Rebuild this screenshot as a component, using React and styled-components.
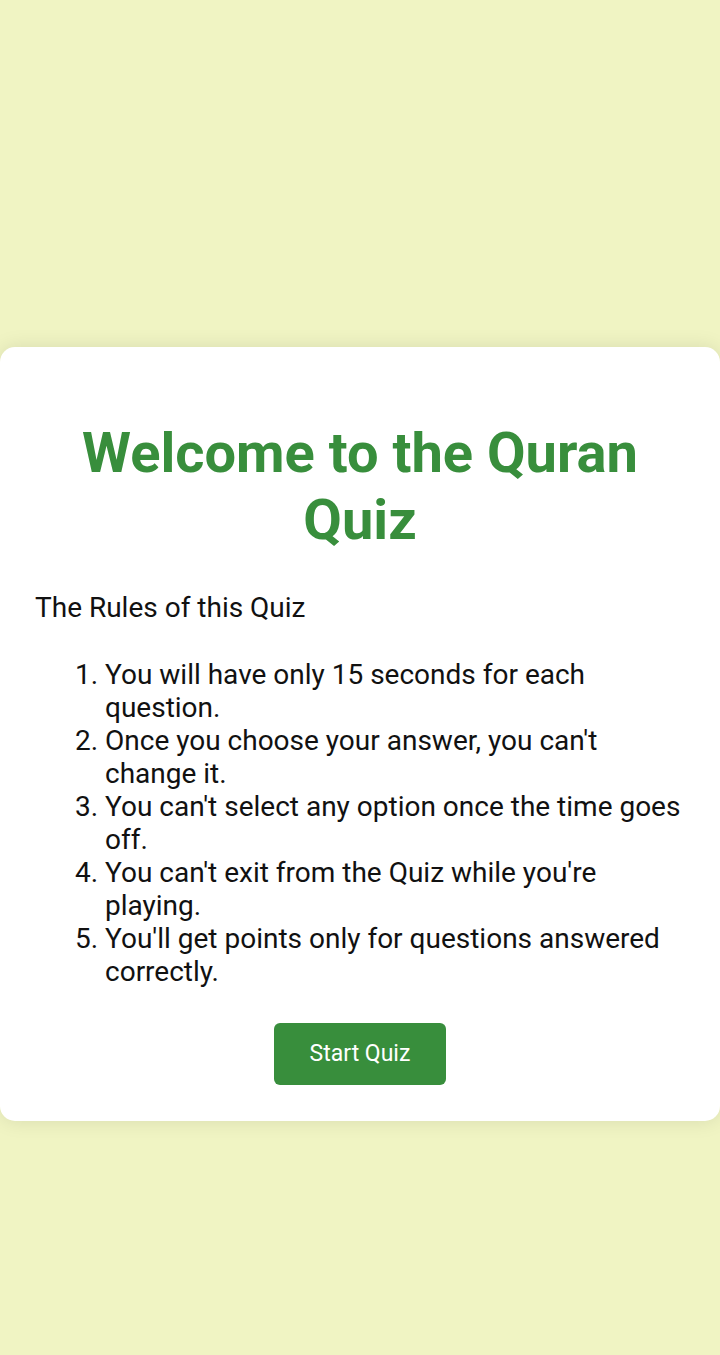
import React from 'react'
import styled, { createGlobalStyle } from 'styled-components'

const GlobalStyle = createGlobalStyle`
  html, body {
    margin: 0;
    padding: 0;
    background: #f0f4c3;
    font-family: Roboto, "Liberation Sans", sans-serif;
  }
`

const Page = styled.div`
  min-height: 100vh;
  box-sizing: border-box;
  padding-top: 112px;
  display: flex;
  align-items: center;
`

const Card = styled.div`
  width: 100%;
  box-sizing: border-box;
  background: #fff;
  border-radius: 15px;
  padding: 36px 35px;
  box-shadow: 0 0 20px rgba(0, 0, 0, 0.1);
  display: flex;
  flex-direction: column;
  align-items: stretch;
`

const Title = styled.h1`
  margin: 37px 0 37px;
  font-size: 56px;
  line-height: 67px;
  font-weight: 700;
  color: #388e3c;
  text-align: center;
`

const Intro = styled.p`
  margin: 0 0 34px;
  font-size: 28px;
  line-height: 33px;
  color: #111;
`

const Rules = styled.ol`
  margin: 0 0 35px;
  padding-left: 70px;
  font-size: 28px;
  line-height: 33px;
  color: #111;
`

const Rule = styled.li``

const StartButton = styled.button`
  align-self: center;
  background: #388e3c;
  color: #fff;
  border: none;
  border-radius: 6px;
  font-family: inherit;
  font-size: 23px;
  height: 62px;
  padding: 0 36px;
  cursor: pointer;
`

const rules = [
  'You will have only 15 seconds for each question.',
  "Once you choose your answer, you can't change it.",
  "You can't select any option once the time goes off.",
  "You can't exit from the Quiz while you're playing.",
  "You'll get points only for questions answered correctly.",
]

export default function App() {
  return (
    <>
      <GlobalStyle />
      <Page>
        <Card>
          <Title>Welcome to the Quran Quiz</Title>
          <Intro>The Rules of this Quiz</Intro>
          <Rules>
            {rules.map((r) => (
              <Rule key={r}>{r}</Rule>
            ))}
          </Rules>
          <StartButton>Start Quiz</StartButton>
        </Card>
      </Page>
    </>
  )
}
